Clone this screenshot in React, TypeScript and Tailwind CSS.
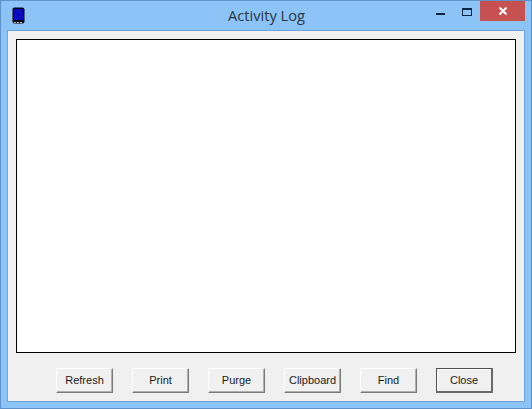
const labels = ["Refresh", "Print", "Purge", "Clipboard", "Find"];

function Btn({ label, def }: { label: string; def?: boolean }) {
  return (
    <button
      className={
        def
          ? "w-[57px] h-[25px] bg-[#f0f0f0] border border-[#505050] border-r-2 border-b-2 border-r-[#6a6a6a] border-b-[#6a6a6a] shadow-[inset_1px_1px_0_#ffffff] text-[11px] text-[#1a1a1a] leading-none font-['Liberation_Sans',sans-serif]"
          : "w-[57px] h-[25px] bg-[#f0f0f0] border border-t-white border-l-white border-r-[#7a7a7a] border-b-[#7a7a7a] shadow-[inset_-1px_-1px_0_#b0b0b0] text-[11px] text-[#1a1a1a] leading-none font-['Liberation_Sans',sans-serif]"
      }
    >
      {label}
    </button>
  );
}

export default function App() {
  return (
    <div className="w-[532px] h-[409px] flex flex-col bg-[#8cc4f7] border border-[#5f93c7] font-['Liberation_Sans',sans-serif]">
      <div className="h-[30px] flex items-center relative shrink-0">
        <svg className="absolute left-[11px] top-[6px]" width="14" height="18" viewBox="0 0 14 18">
          <rect x="0.5" y="0.5" width="12" height="16" rx="2" fill="#04040c" />
          <rect x="2" y="2" width="9" height="11" fill="#0a0ac0" />
          <rect x="2" y="15" width="2" height="1" fill="#c0c0c0" />
          <rect x="5" y="15" width="2" height="1" fill="#c0c0c0" />
          <rect x="8" y="15" width="2" height="1" fill="#c0c0c0" />
        </svg>
        <div className="flex-1 text-center text-[14.7px] text-[#2a3642] font-['Open_Sans',sans-serif] pb-[2px] pl-[1px]">
          Activity Log
        </div>
        <div className="absolute right-[6px] top-0 w-[45px] h-[20px] bg-[#c75050] flex items-center justify-center">
          <svg width="10" height="10" viewBox="0 0 10 10">
            <path d="M1.5 1.5 L8.5 8.5 M8.5 1.5 L1.5 8.5" stroke="#fff" strokeWidth="2" />
          </svg>
        </div>
        <div className="absolute left-[461px] top-[7px] w-[10px] h-[8px] border border-[#10253f] border-t-2" />
        <div className="absolute left-[435px] top-[12px] w-[9px] h-[2px] bg-[#10253f]" />
      </div>
      <div className="mx-[7px] mb-[7px] flex-1 bg-[#f0f0f0] flex flex-col px-[8px] pt-[8px] shadow-[0_0_0_1px_#6da5dc]">
        <div className="h-[314px] bg-white border border-black shrink-0" />
        <div className="flex gap-[19px] pl-[40px] pt-[15px]">
          {labels.map((l) => (
            <Btn key={l} label={l} />
          ))}
          <Btn label="Close" def />
        </div>
      </div>
    </div>
  );
}
